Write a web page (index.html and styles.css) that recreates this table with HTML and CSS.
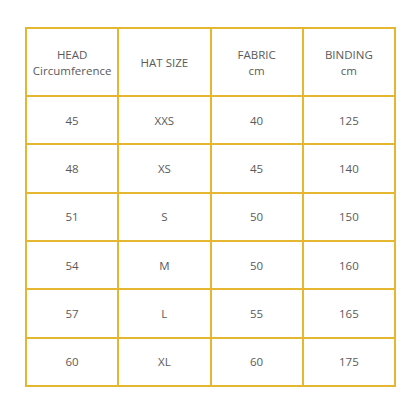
FILE: index.html
```html
<!DOCTYPE html>
<html>
<head>
<meta charset="utf-8">
<link rel="stylesheet" href="styles.css">
</head>
<body>
<div class="chart">
  <div class="cell">HEAD<br>Circumference</div>
  <div class="cell">HAT SIZE</div>
  <div class="cell">FABRIC<br>cm</div>
  <div class="cell">BINDING<br>cm</div>
  <div class="cell">45</div><div class="cell">XXS</div><div class="cell">40</div><div class="cell">125</div>
  <div class="cell">48</div><div class="cell">XS</div><div class="cell">45</div><div class="cell">140</div>
  <div class="cell">51</div><div class="cell">S</div><div class="cell">50</div><div class="cell">150</div>
  <div class="cell">54</div><div class="cell">M</div><div class="cell">50</div><div class="cell">160</div>
  <div class="cell">57</div><div class="cell">L</div><div class="cell">55</div><div class="cell">165</div>
  <div class="cell">60</div><div class="cell">XL</div><div class="cell">60</div><div class="cell">175</div>
</div>
</body>
</html>
```
FILE: styles.css
```css
html, body {
  margin: 0;
  padding: 0;
  background: #ffffff;
}
body {
  padding: 27px 0 0 25px;
  font-family: "Open Sans", "Liberation Sans", sans-serif;
}
.chart {
  display: grid;
  width: 371px;
  box-sizing: border-box;
  grid-template-columns: repeat(4, 1fr);
  grid-template-rows: 66px repeat(6, 1fr);
  height: 360px;
  gap: 2px;
  padding: 2px;
  background: #e5b630;
}
.cell {
  background: #ffffff;
  display: flex;
  align-items: center;
  justify-content: center;
  text-align: center;
  font-size: 11.5px;
  line-height: 16px;
  color: #5a5a5a;
  padding-top: 1px;
}
```
